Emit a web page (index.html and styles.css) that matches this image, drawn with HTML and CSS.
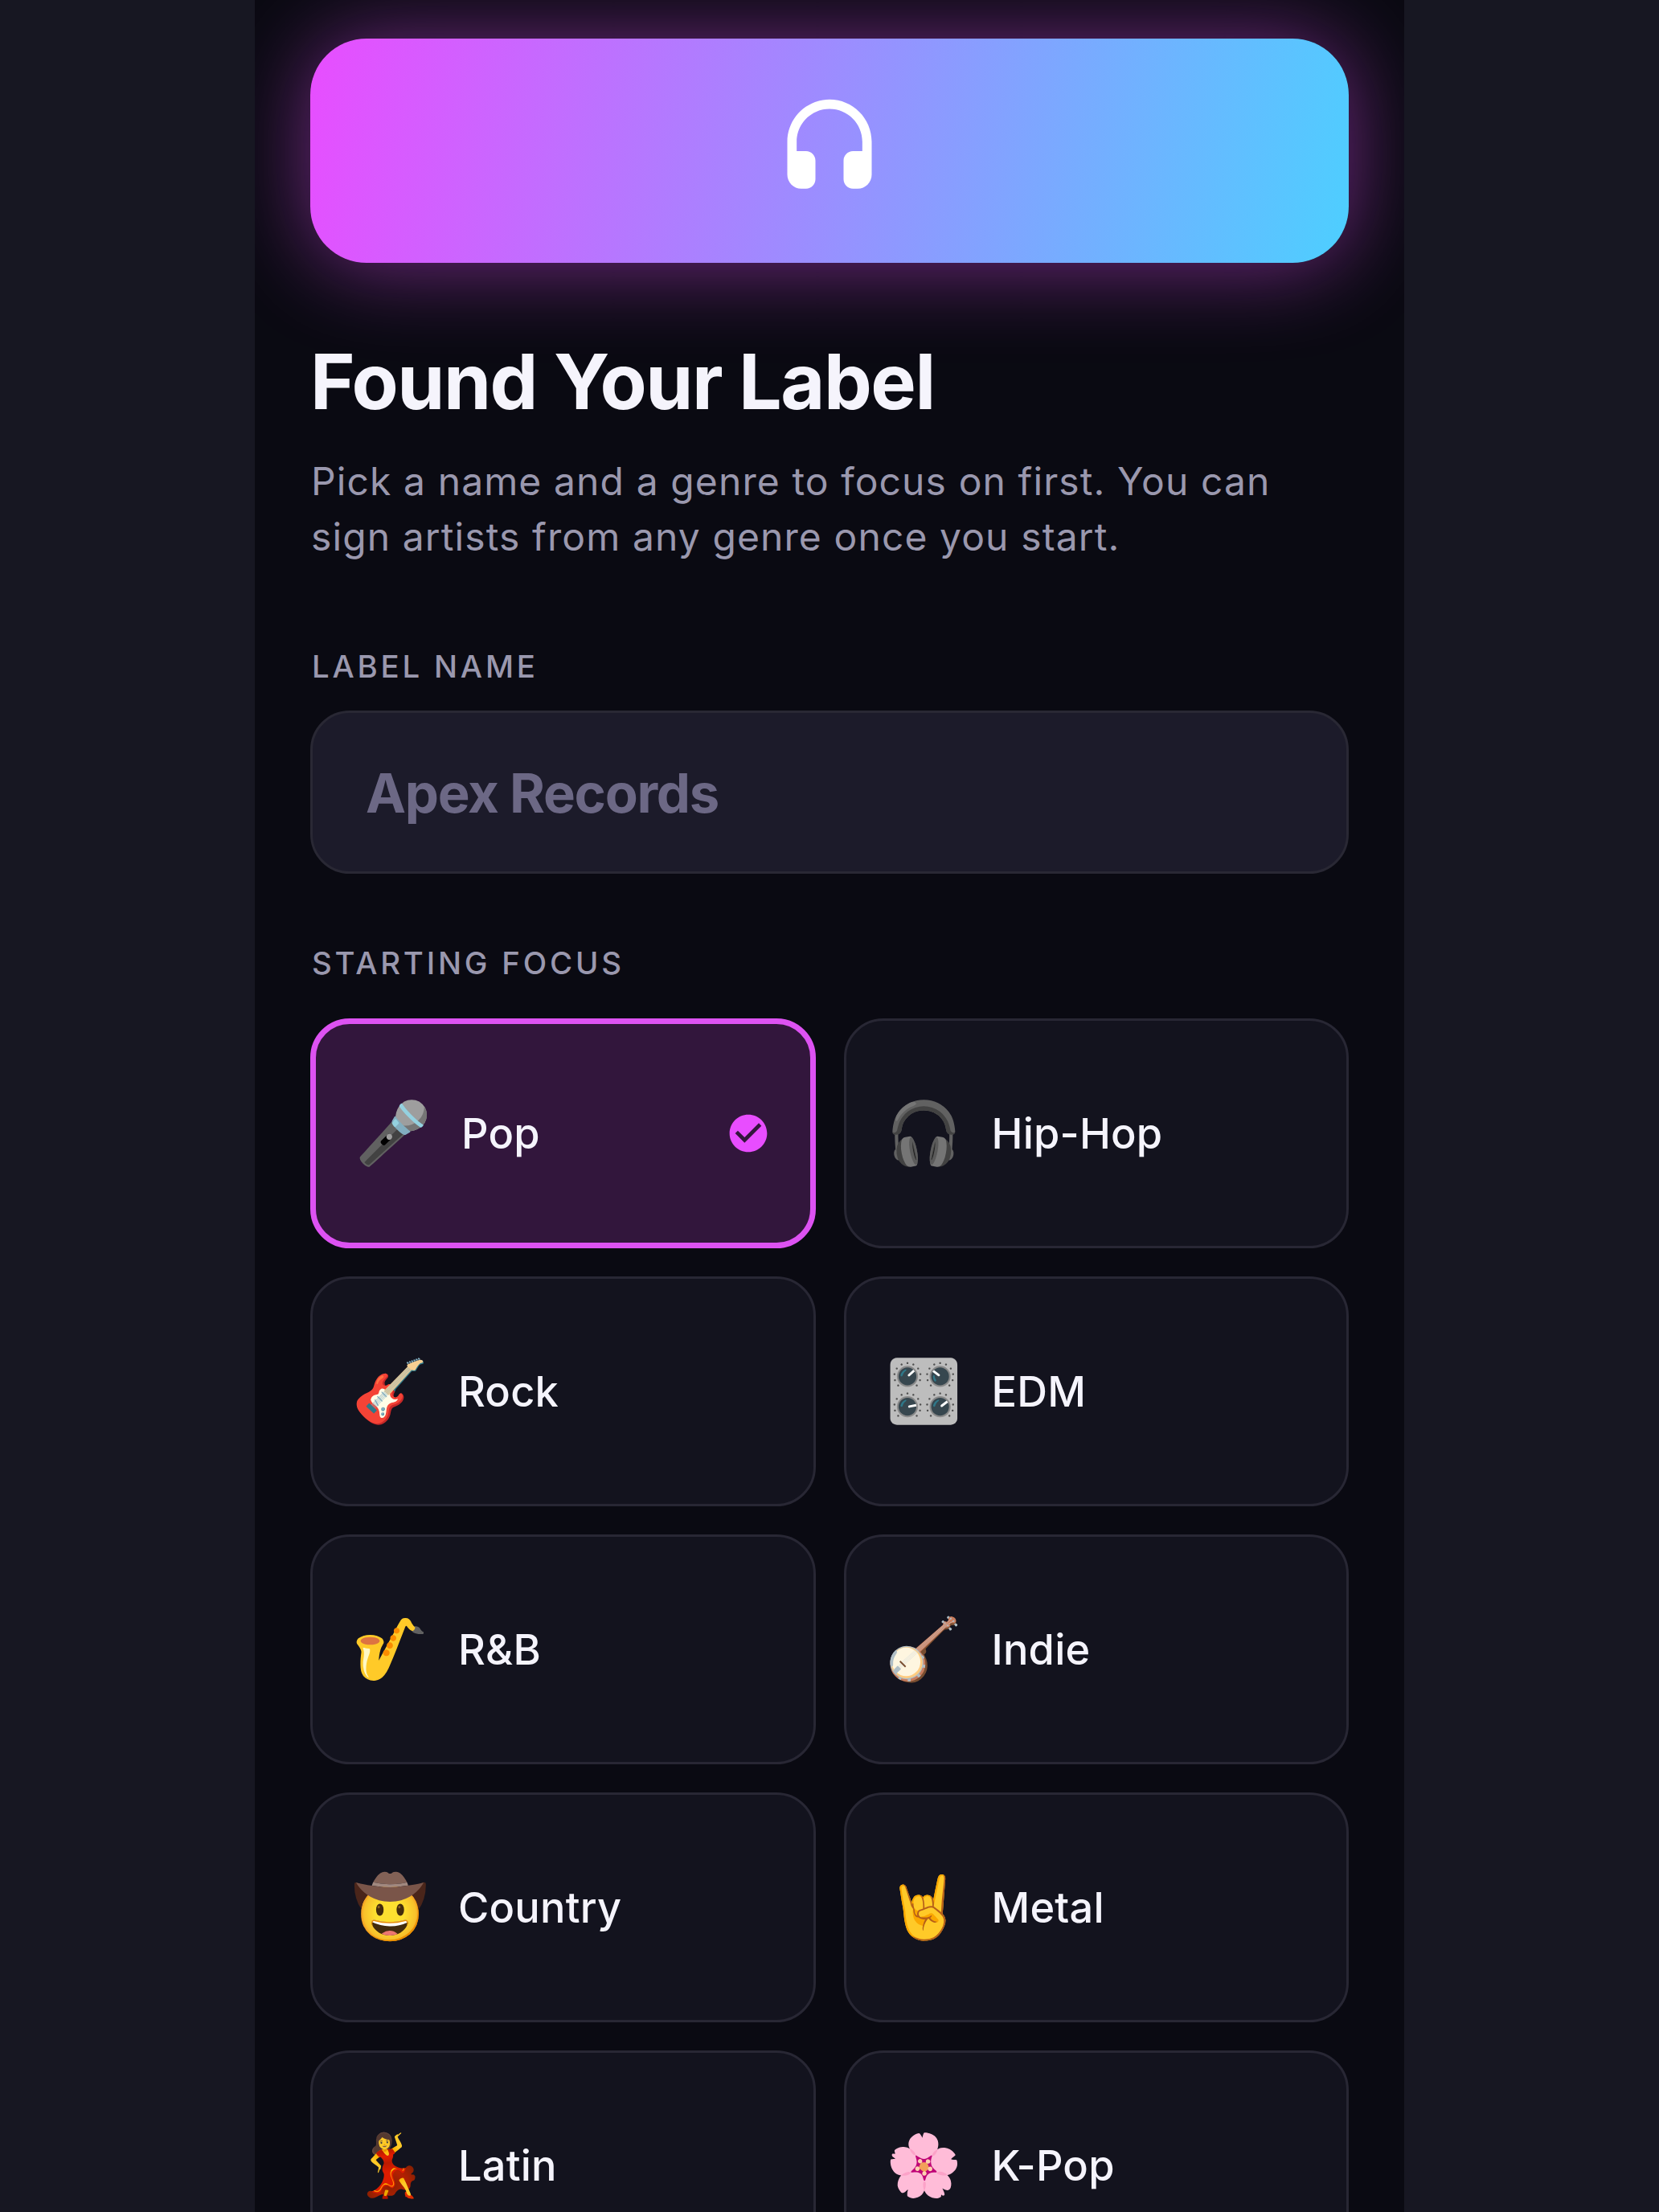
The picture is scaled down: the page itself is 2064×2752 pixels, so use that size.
FILE: index.html
```html
<!DOCTYPE html>
<html lang="en">
<head>
  <meta charset="UTF-8">
  <title>Found Your Label</title>
  <link rel="stylesheet" href="styles.css">
</head>
<body>

  <main class="screen">
    <div class="hero">
      <svg class="hero-icon" viewBox="0 0 24 24"><path fill="#fff" d="M12 1C7.03 1 3 5.03 3 10v7c0 1.66 1.34 3 3 3h1c1.1 0 2-.9 2-2v-4c0-1.1-.9-2-2-2H5v-2c0-3.87 3.13-7 7-7s7 3.13 7 7v2h-2c-1.1 0-2 .9-2 2v4c0 1.1.9 2 2 2h1c1.66 0 3-1.34 3-3v-7c0-4.97-4.03-9-9-9z"/></svg>
    </div>

    <h1>Found Your Label</h1>
    <p class="intro">Pick a name and a genre to focus on first. You can<br>sign artists from any genre once you start.</p>

    <label class="caption" for="labelName">LABEL NAME</label>
    <input id="labelName" class="name-input" type="text" placeholder="Apex Records">

    <div class="caption focus">STARTING FOCUS</div>
    <div class="genres">
      <div class="genre selected">
        <span class="emoji">🎤</span><span class="name">Pop</span>
        <svg class="check" viewBox="0 0 24 24"><path fill="#e84dff" d="M12 2C6.48 2 2 6.48 2 12s4.48 10 10 10 10-4.480 10-10S17.520 2 12 2zm-2 15l-5-5 1.410-1.410L10 14.170l7.590-7.590L19 8l-9 9z"/></svg>
      </div>
      <div class="genre"><span class="emoji">🎧</span><span class="name">Hip-Hop</span></div>
      <div class="genre"><span class="emoji">🎸</span><span class="name">Rock</span></div>
      <div class="genre"><span class="emoji">🎛️</span><span class="name">EDM</span></div>
      <div class="genre"><span class="emoji">🎷</span><span class="name">R&amp;B</span></div>
      <div class="genre"><span class="emoji">🪕</span><span class="name">Indie</span></div>
      <div class="genre"><span class="emoji">🤠</span><span class="name">Country</span></div>
      <div class="genre"><span class="emoji">🤘</span><span class="name">Metal</span></div>
      <div class="genre"><span class="emoji">💃</span><span class="name">Latin</span></div>
      <div class="genre"><span class="emoji">🌸</span><span class="name">K-Pop</span></div>
    </div>
  </main>

</body>
</html>
```
FILE: styles.css
```css
* {
  box-sizing: border-box;
}

body {
  margin: 0;
  height: 2752px;
  overflow: hidden;
  background: #171722;
  font-family: Inter, sans-serif;
}

.screen {
  width: 1430px;
  height: 2752px;
  margin-left: 317px;
  padding: 48px 69px 0;
  background: #0a0a12;
  overflow: hidden;
}

.hero {
  display: flex;
  justify-content: center;
  align-items: center;
  height: 279px;
  border-radius: 70px;
  background: linear-gradient(102.2deg, #e84dff, #4dcfff);
  box-shadow: 0 3px 110px rgba(232, 77, 255, 0.48);
}

.hero-icon {
  width: 140px;
  height: 140px;
  margin-top: 1px;
}

h1 {
  margin: 91px 0 0;
  font-size: 95px;
  line-height: 114px;
  font-weight: 700;
  letter-spacing: -1.5px;
  color: #f5f4fc;
}

.intro {
  margin: 32px 0 0;
  padding-left: 1px;
  font-size: 48px;
  line-height: 69px;
  letter-spacing: 1.1px;
  color: #9a98ae;
}

.caption {
  display: block;
  margin-top: 102px;
  padding-left: 2px;
  font-size: 38.4px;
  line-height: 50px;
  font-weight: 500;
  letter-spacing: 3.8px;
  color: #9a98ae;
}

.name-input {
  display: block;
  width: 100%;
  height: 203px;
  margin-top: 30px;
  padding: 2px 66px 0;
  border: 3px solid #292834;
  border-radius: 49px;
  background: #1c1b2a;
  font-family: inherit;
  font-size: 67px;
  font-weight: 700;
  letter-spacing: -1.3px;
  color: #f5f4fc;
}

.name-input::placeholder {
  color: #6c6885;
}

.focus {
  margin-top: 86px;
}

.genres {
  display: grid;
  grid-template-columns: 1fr 1fr;
  grid-auto-rows: 286px;
  gap: 35px;
  margin-top: 44px;
}

.genre {
  display: flex;
  align-items: center;
  padding: 0 49px;
  border: 3px solid #282734;
  border-radius: 49px;
  background: #13131e;
}

.selected {
  border: 7px solid #dd52f2;
  background: #32163c;
}

.emoji {
  width: 95px;
  margin: 0 37px 4px 0;
  font-size: 76px;
  line-height: 95px;
}

.name {
  flex: 1;
  font-size: 52.3px;
  font-weight: 500;
  letter-spacing: 0.2px;
  color: #f5f4fc;
}

.check {
  width: 56px;
  height: 56px;
}
```
